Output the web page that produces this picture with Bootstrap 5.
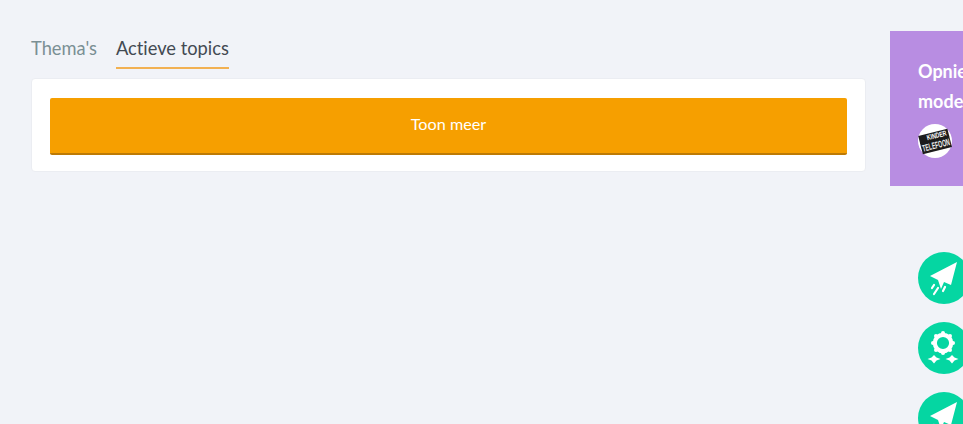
<!DOCTYPE html>
<html lang="nl">
<head>
<meta charset="utf-8">
<title>Topics</title>
<link href="https://cdn.jsdelivr.net/npm/bootstrap@5.3.0/dist/css/bootstrap.min.css" rel="stylesheet">
<style>
html,body{height:424px;overflow:hidden}
body{background:#f1f3f8;font-family:Lato,"Liberation Sans",sans-serif;color:#3c4650;font-variant-ligatures:none}
.page-wrap{padding:31px 0 0 31px;gap:24px;width:1300px}
.main-col{width:835px;flex:none}
.tab-row{gap:19px;height:47px;padding-top:5px;font-size:18.3px;line-height:24px}
.tab-item{color:#7a8f94;text-decoration:none;display:block;height:33px}
.tab-item.is-on{color:#434a52;border-bottom:2px solid #f2b152}
.panel{background:#fff;border:1px solid #ebedf2;border-radius:4px;padding:19px 18px 16px;height:94px}
.more-btn{background:#f69f00;color:#fff;width:100%;height:57px;border:0;border-bottom:2px solid #bd7a05;border-radius:2px;font-size:16.2px;padding:0 0 2px}
.side-col{width:380px;flex:none}
.promo{background:#b88de2;color:#fff;height:155px;padding:25px 28px;font-weight:700;font-size:18px;line-height:30px}
.promo-logo{display:block;width:34px;height:34px;margin-top:8px}
.badge-list{padding:66px 0 0 28px;gap:18px}
.round-ico{display:block;width:52px;height:52px;flex:none}
</style>
</head>
<body>
<div class="page-wrap d-flex">
  <div class="main-col">
    <div class="tab-row d-flex">
      <a class="tab-item" href="#">Thema's</a>
      <a class="tab-item is-on" href="#">Actieve topics</a>
    </div>
    <div class="panel">
      <button class="more-btn btn" type="button">Toon meer</button>
    </div>
  </div>
  <div class="side-col">
    <div class="promo">
      <div class="text-nowrap">Opnieuw aan de slag als<br>moderator op het forum</div>
      <svg class="promo-logo" viewBox="0 0 34 34" aria-hidden="true">
        <circle cx="17" cy="17" r="17" fill="#fff"/>
        <g transform="rotate(-14 17 17)">
          <rect x="2" y="8" width="30" height="8" fill="#1c1c1c"/>
          <rect x="2" y="15" width="30" height="12" fill="#1c1c1c"/>
          <text x="10" y="14.500" font-size="7.500" font-weight="900" fill="#fff" font-family="Liberation Sans" textLength="20" lengthAdjust="spacingAndGlyphs">KINDER</text>
          <text x="3" y="24.500" font-size="9.500" font-weight="900" fill="#eee" font-family="Liberation Sans" textLength="28" lengthAdjust="spacingAndGlyphs">TELEFOON</text>
        </g>
      </svg>
    </div>
    <div class="badge-list d-flex flex-column">
      <svg class="round-ico" viewBox="0 0 52 52" aria-hidden="true">
        <circle cx="26" cy="26" r="26" fill="#05d6a2"/>
        <path d="M39 10 12 24l8 4 3 9 3-7 7 3z" fill="#fff"/>
        <path d="M16 33l-2 3M20 36l-4 6M27 35l-2 4" stroke="#fff" stroke-width="2.200" stroke-linecap="round" fill="none"/>
      </svg>
      <svg class="round-ico" viewBox="0 0 52 52" aria-hidden="true">
        <circle cx="26" cy="26" r="26" fill="#05d6a2"/>
        <circle cx="25" cy="21" r="8.200" fill="none" stroke="#fff" stroke-width="4.200"/>
        <g fill="#fff">
          <circle cx="25" cy="11" r="2"/><circle cx="32" cy="14" r="2"/><circle cx="35" cy="21" r="2"/><circle cx="32" cy="28" r="2"/>
          <circle cx="25" cy="31" r="2"/><circle cx="18" cy="28" r="2"/><circle cx="15" cy="21" r="2"/><circle cx="18" cy="14" r="2"/>
        </g>
        <path d="M16 33l2.500 2.500 4 1.500-4 1.500-2.500 3-2.500-3-4-1.500 4-1.500zM34 33l2.500 2.500 4 1.500-4 1.500-2.500 3-2.500-3-4-1.500 4-1.500z" fill="#fff"/>
      </svg>
      <svg class="round-ico" viewBox="0 0 52 52" aria-hidden="true">
        <circle cx="26" cy="26" r="26" fill="#05d6a2"/>
        <path d="M39 10 12 24l8 4 3 9 3-7 7 3z" fill="#fff"/>
        <path d="M16 33l-2 3M20 36l-4 6M27 35l-2 4" stroke="#fff" stroke-width="2.200" stroke-linecap="round" fill="none"/>
      </svg>
    </div>
  </div>
</div>
<script src="https://cdn.jsdelivr.net/npm/bootstrap@5.3.0/dist/js/bootstrap.bundle.min.js"></script>
</body>
</html>
